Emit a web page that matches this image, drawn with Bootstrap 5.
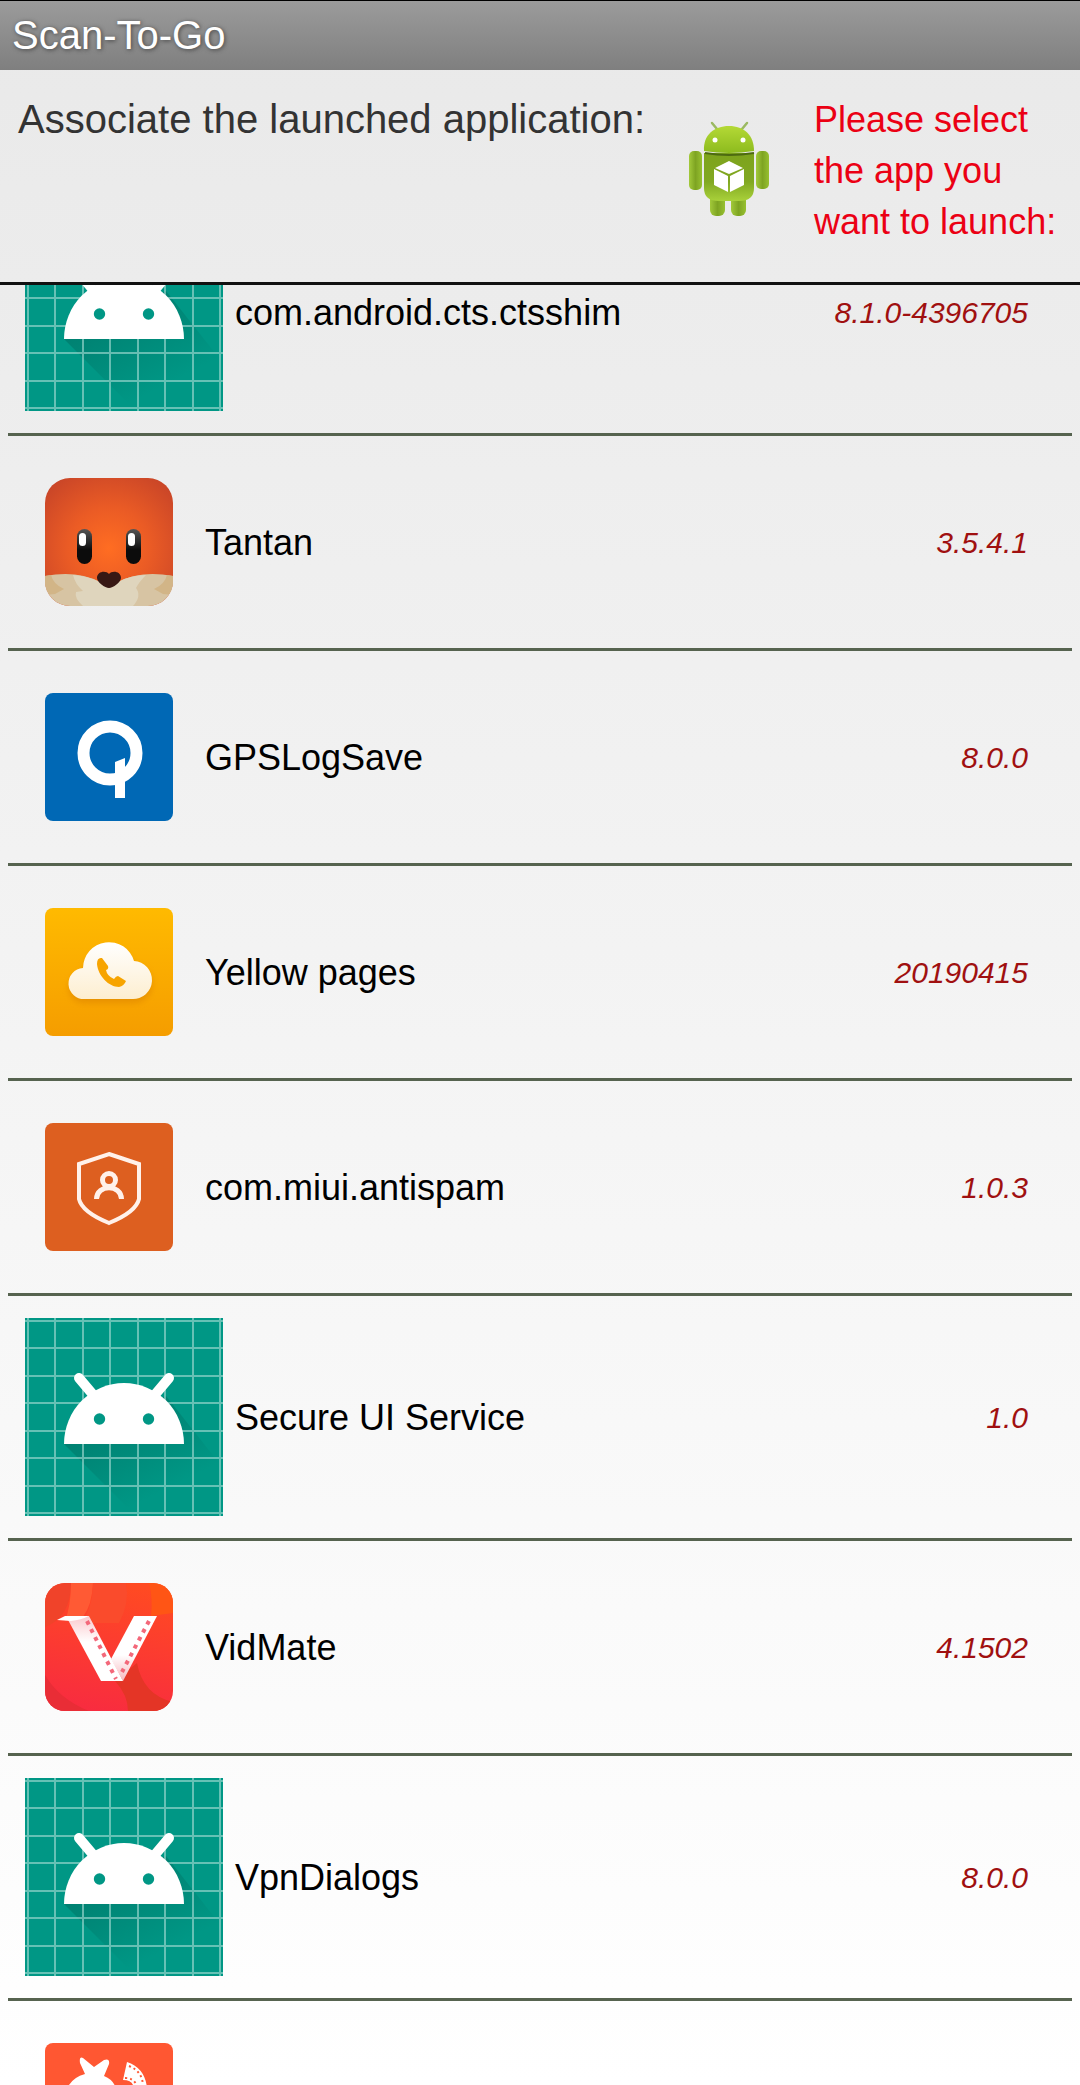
<!DOCTYPE html>
<html lang="en">
<head>
<meta charset="utf-8">
<meta name="viewport" content="width=device-width, initial-scale=1">
<title>Scan-To-Go</title>
<link href="https://cdn.jsdelivr.net/npm/bootstrap@5.3.0/dist/css/bootstrap.min.css" rel="stylesheet">
<style>
  body {
    font-family: "Liberation Sans", Arial, sans-serif;
    font-size: 36px;
    line-height: 51px;
    color: #000;
    background: linear-gradient(#e9e9e9, #fff);
  }
  .app-bar {
    border-top: 1px solid #000;
    padding: 0 12px;
    background: linear-gradient(#9b9b9b, #7f7f7f);
  }
  .app-title {
    font-size: 40px;
    line-height: 69px;
    color: #fff;
    text-shadow: 1px 1px 4px #444;
  }
  .chooser { border-bottom: 3px solid #111; padding: 24px 0 35px 18px; }
  .chooser-label { font-size: 40px; color: #333; width: 660px; }
  .chooser-hint { color: #eb0014; width: 266px; }
  .robot { width: 96px; height: 96px; margin: 26px 35px 0 5px; }
  /* The list is shown part-way through its scroll */
  .app-list { margin: -94px 8px 0; }
  .app-row { padding: 22px 44px 22px 17px; border-bottom: 3px solid #56634f; gap: 12px; }
  .tile-lg { width: 198px; height: 198px; }
  .tile-sm { width: 128px; height: 128px; margin: 20px; }
  .version { font-size: 30px; font-style: italic; color: #a01010; }
</style>
</head>
<body class="vh-100 d-flex flex-column overflow-hidden">

<svg width="0" height="0" class="position-absolute" aria-hidden="true">
  <defs>
    <linearGradient id="shade" gradientUnits="userSpaceOnUse" x1="80" y1="90" x2="125" y2="180"><stop offset="0" stop-color="#00473e" stop-opacity=".32"/><stop offset="1" stop-color="#00473e" stop-opacity="0"/></linearGradient>
    <symbol id="droid" viewBox="0 0 198 198">
      <rect width="198" height="198" fill="#009785"/>
      <path d="M39 126L111 198H198V150L141 78z" fill="url(#shade)"/>
      <path d="M3 0V198M30 0V198M58 0V198M85 0V198M113 0V198M140 0V198M168 0V198M195 0V198M0 3H198M0 30H198M0 58H198M0 85H198M0 113H198M0 140H198M0 168H198M0 195H198" stroke="#a5dcd4" stroke-opacity=".62" stroke-width="2"/>
      <path d="M39 126a60 61 0 0 1 120 0z" fill="#fff"/>
      <path d="M54 60L70 79M144 60L128 79" stroke="#fff" stroke-width="10" stroke-linecap="round"/>
      <circle cx="74.500" cy="101" r="5.700" fill="#009785"/><circle cx="123.500" cy="101" r="5.700" fill="#009785"/>
    </symbol>
  </defs>
</svg>

<header class="app-bar flex-shrink-0"><h1 class="app-title m-0 fw-normal">Scan-To-Go</h1></header>

<section class="chooser d-flex flex-shrink-0 align-items-start">
  <div class="chooser-label flex-shrink-0">Associate the launched application:</div>
  <svg class="robot flex-shrink-0" viewBox="0 0 96 96" role="img" aria-label="Android app">
    <defs>
      <linearGradient id="gHead" x1="0" y1="0" x2="0" y2="1"><stop offset="0" stop-color="#b4d936"/><stop offset="1" stop-color="#8dbb1e"/></linearGradient>
      <linearGradient id="gBody" x1="0" y1="0" x2="0" y2="1"><stop offset="0" stop-color="#7da31c"/><stop offset=".6" stop-color="#81a822"/><stop offset="1" stop-color="#a9d13a"/></linearGradient>
      <linearGradient id="gLimb" x1="0" y1="0" x2="1" y2="0"><stop offset="0" stop-color="#a2c93a"/><stop offset=".5" stop-color="#7ea422"/><stop offset="1" stop-color="#97c030"/></linearGradient>
    </defs>
    <g stroke="#9bb962" stroke-width="2.500" stroke-linecap="round"><path d="M29 3L34 9M64 3L59 9"/></g>
    <rect x="27" y="70" width="15" height="26" rx="6" fill="url(#gLimb)"/><rect x="48" y="70" width="15" height="26" rx="6" fill="url(#gLimb)"/>
    <rect x="6" y="31" width="13" height="39" rx="5" fill="url(#gLimb)"/><rect x="73" y="31" width="13" height="38" rx="5" fill="url(#gLimb)"/>
    <path d="M21 33H71V68Q71 81 56 81H36Q21 81 21 68z" fill="url(#gBody)"/>
    <path d="M22 33Q46 37 71 33" fill="none" stroke="#4d6a11" stroke-width="2"/>
    <path d="M21 31C20 15 31 6 46 6S71 15 71 31Q46 35 21 31z" fill="url(#gHead)"/>
    <circle cx="32" cy="20" r="2.500" fill="#fff"/><circle cx="60" cy="20" r="2.500" fill="#fff"/>
    <path d="M46 41L60 48 46 54 32 48zM31 49L45 56V72L31 65zM61 49L47 56V72L61 65z" fill="#fff"/>
  </svg>
  <div class="chooser-hint">Please select<br>the app you<br>want to launch:</div>
</section>

<main class="overflow-hidden flex-grow-1">
<ul class="app-list list-unstyled">
  <li class="app-row d-flex align-items-center">
    <svg class="tile-lg flex-shrink-0" aria-hidden="true"><use href="#droid"/></svg>
    <span>com.android.cts.ctsshim</span><span class="version ms-auto">8.1.0-4396705</span>
  </li>
  <li class="app-row d-flex align-items-center">
    <svg class="tile-sm flex-shrink-0" viewBox="0 0 128 128" aria-hidden="true">
      <defs><radialGradient id="fox" cx=".5" cy=".55" r=".72"><stop offset="0" stop-color="#ff6d22"/><stop offset=".45" stop-color="#ea5b25"/><stop offset="1" stop-color="#c44228"/></radialGradient><clipPath id="foxClip"><rect width="128" height="128" rx="25"/></clipPath>
      <linearGradient id="eye" x1="0" y1="0" x2="0" y2="1"><stop offset="0" stop-color="#555"/><stop offset=".6" stop-color="#0c0c0c"/></linearGradient></defs>
      <g clip-path="url(#foxClip)">
        <rect width="128" height="128" fill="url(#fox)"/>
        <path d="M0 98Q32 92 55 104H73Q96 92 128 98V128H0z" fill="#d7c4a3"/>
        <path d="M0 98L6 97Q8 106 19 111L10 116 0 117zM128 98L122 97Q120 106 109 111L118 116 128 117z" fill="#d2b587"/>
        <path d="M28 97Q43 98 55 104H73Q86 97 101 97Q94 104 91 110Q97 118 88 128H38Q29 120 31 114L38 113Q30 106 28 97z" fill="#dfd5bd"/>
        <rect x="32" y="51" width="15" height="35" rx="7.500" fill="url(#eye)"/><rect x="81" y="51" width="15" height="35" rx="7.500" fill="url(#eye)"/>
        <rect x="34" y="55" width="7" height="13" rx="3.500" fill="#fff"/><rect x="83" y="55" width="7" height="13" rx="3.500" fill="#fff"/>
        <path d="M64 96C61 92 52 93 52 100C52 104 60 110 64 110S76 104 76 100C76 93 67 92 64 96z" fill="#371814"/>
      </g>
    </svg>
    <span>Tantan</span><span class="version ms-auto">3.5.4.1</span>
  </li>
  <li class="app-row d-flex align-items-center">
    <svg class="tile-sm flex-shrink-0" viewBox="0 0 128 128" aria-hidden="true">
      <rect width="128" height="128" rx="8" fill="#0068b5"/>
      <circle cx="65" cy="60" r="26.500" fill="none" stroke="#fff" stroke-width="12"/>
      <path d="M70 69L80 65V105H70z" fill="#fff"/>
    </svg>
    <span>GPSLogSave</span><span class="version ms-auto">8.0.0</span>
  </li>
  <li class="app-row d-flex align-items-center">
    <svg class="tile-sm flex-shrink-0" viewBox="0 0 128 128" aria-hidden="true">
      <defs><linearGradient id="yp" x1="0" y1="0" x2="0" y2="1"><stop offset="0" stop-color="#ffba00"/><stop offset="1" stop-color="#f59d00"/></linearGradient><linearGradient id="cloud" x1="0" y1="0" x2="0" y2="1"><stop offset="0" stop-color="#fff"/><stop offset="1" stop-color="#fdeed0"/></linearGradient><filter id="soft"><feGaussianBlur stdDeviation="3"/></filter></defs>
      <rect width="128" height="128" rx="8" fill="url(#yp)"/>
      <path d="M40 95A15 15 0 0 1 38 65 27 27 0 0 1 89 57 19 19 0 0 1 87 95z" fill="#df8600" opacity=".65" filter="url(#soft)"/>
      <path d="M40 91A15 15 0 0 1 38 60A26 26 0 0 1 89 53A19 19 0 0 1 87 91z" fill="url(#cloud)"/>
      <path d="M57 50Q52 49 52 56C53 68 64 79 74 79Q79 78 81 73L73 68Q71 68 69 71 62 68 61 62 64 61 63 58z" fill="#f7a400"/>
    </svg>
    <span>Yellow pages</span><span class="version ms-auto">20190415</span>
  </li>
  <li class="app-row d-flex align-items-center">
    <svg class="tile-sm flex-shrink-0" viewBox="0 0 128 128" aria-hidden="true">
      <rect width="128" height="128" rx="8" fill="#dd5f20"/>
      <g fill="none" stroke="#fff1ea" stroke-width="4"><path d="M64 31L94 41V76Q91 89 64 100 37 89 34 76V41z"/><g stroke-width="5"><circle cx="64" cy="57" r="6.500"/><path d="M51.500 76C52 61 76 61 76.500 76"/></g></g>
    </svg>
    <span>com.miui.antispam</span><span class="version ms-auto">1.0.3</span>
  </li>
  <li class="app-row d-flex align-items-center">
    <svg class="tile-lg flex-shrink-0" aria-hidden="true"><use href="#droid"/></svg>
    <span>Secure UI Service</span><span class="version ms-auto">1.0</span>
  </li>
  <li class="app-row d-flex align-items-center">
    <svg class="tile-sm flex-shrink-0" viewBox="0 0 128 128" aria-hidden="true">
      <defs><linearGradient id="vm" x1="0.600" y1="0" x2="0.400" y2="1"><stop offset="0" stop-color="#ff4a22"/><stop offset="1" stop-color="#f82c3f"/></linearGradient><linearGradient id="arm" x1="0" y1="0" x2="0" y2="1"><stop offset="0" stop-color="#fbc9cd"/><stop offset=".4" stop-color="#fff"/></linearGradient><linearGradient id="arm2" x1="0" y1="0" x2="0" y2="1"><stop offset=".6" stop-color="#fff"/><stop offset="1" stop-color="#f7b8bf"/></linearGradient><clipPath id="vmClip"><rect width="128" height="128" rx="20"/></clipPath></defs>
      <g clip-path="url(#vmClip)">
        <rect width="128" height="128" fill="url(#vm)"/>
        <path d="M26 0H0V44Q26 34 26 0z" fill="#f0432a"/><path d="M26 0H48Q47 22 38 34L20 38Q26 22 26 0z" fill="#ff5a34"/>
        <path d="M48 0H81Q85 20 74 40H36Q48 24 48 0z" fill="#fa4b2c"/><path d="M104 0H128V30L106 33Q108 15 104 0z" fill="#ff5515"/>
        <path d="M0 92Q14 116 44 128H0z" fill="#e92d36"/><path d="M70 98Q83 112 83 128H117L128 119Q98 112 92 80z" fill="#e43526"/>
        <path d="M89 33H112L78 98 66 76z" fill="url(#arm2)"/>
        <path d="M22 35L44 33 78 98H56z" fill="url(#arm)"/><path d="M12 37L20 33H44Q36 37 26 38z" fill="#fff"/>
        <path d="M42 38L71 96M104 38L77 89" stroke="#f3687a" stroke-width="4" stroke-dasharray="4 5" fill="none"/>
      </g>
    </svg>
    <span>VidMate</span><span class="version ms-auto">4.1502</span>
  </li>
  <li class="app-row d-flex align-items-center">
    <svg class="tile-lg flex-shrink-0" aria-hidden="true"><use href="#droid"/></svg>
    <span>VpnDialogs</span><span class="version ms-auto">8.0.0</span>
  </li>
  <li class="app-row d-flex align-items-center">
    <svg class="tile-sm flex-shrink-0" viewBox="0 0 128 128" aria-hidden="true">
      <rect width="128" height="128" rx="8" fill="#ff5732"/>
      <path d="M24 42Q29 34 40 31L35 20Q34 13 38 15L49 24 59 17Q65 15 64 21L59 33Q69 37 71 46V90H24z" fill="#fff"/>
      <path d="M82 19Q100 25 102 45L88 42Q86 37 78 37z" fill="#fff"/>
      <path d="M84 23Q97 28 98 42M80 35Q88 35 91 41" stroke="#ff5732" stroke-width="2" stroke-dasharray="2 3" fill="none"/>
    </svg>
  </li>
</ul>
</main>

<script src="https://cdn.jsdelivr.net/npm/bootstrap@5.3.0/dist/js/bootstrap.bundle.min.js"></script>
</body>
</html>
